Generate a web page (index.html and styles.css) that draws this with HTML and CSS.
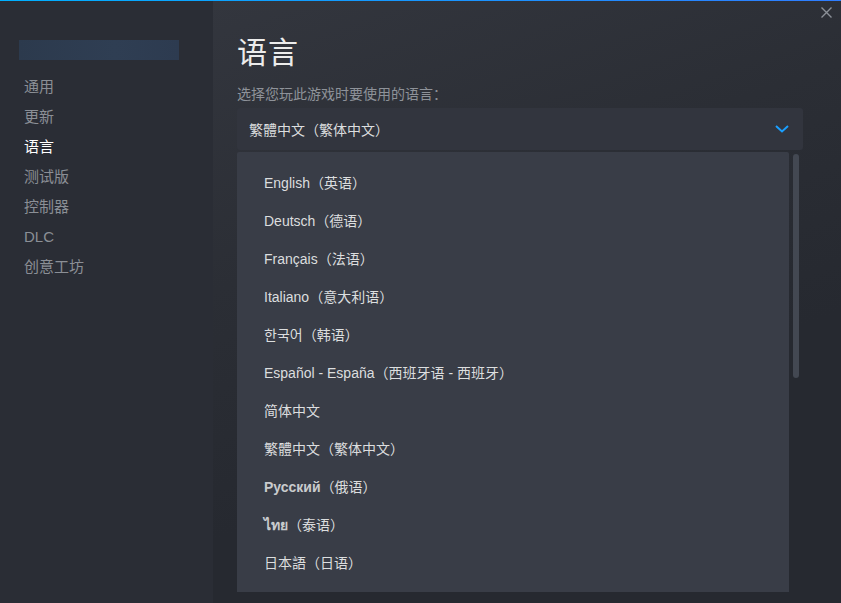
FILE: index.html
```html
<!DOCTYPE html>
<html lang="zh-CN">
<head>
  <meta charset="UTF-8">
  <title>语言</title>
  <link rel="stylesheet" href="styles.css">
</head>
<body>
  <div class="topline"></div>
  <div class="window">
    <aside class="sidebar">
      <div class="game-name"></div>
      <nav class="nav">
        <div class="nav-item">通用</div>
        <div class="nav-item">更新</div>
        <div class="nav-item active">语言</div>
        <div class="nav-item">测试版</div>
        <div class="nav-item">控制器</div>
        <div class="nav-item">DLC</div>
        <div class="nav-item">创意工坊</div>
      </nav>
    </aside>

    <main class="content">
      <button class="close-btn" title="关闭">
        <svg width="11" height="11" viewBox="0 0 11 11">
          <path d="M0.5 0.5 L10.5 10.5 M10.5 0.5 L0.5 10.5" stroke="#8b9097" stroke-width="1.4" fill="none"/>
        </svg>
      </button>

      <h1 class="title">语言</h1>
      <p class="subtitle">选择您玩此游戏时要使用的语言：</p>

      <div class="dropdown">
        <span>繁體中文（繁体中文）</span>
        <svg class="chevron" width="14" height="8" viewBox="0 0 14 8">
          <path d="M1 1 L7 6.5 L13 1" stroke="#1a9fff" stroke-width="2" fill="none"/>
        </svg>
      </div>

      <div class="list-wrap">
        <ul class="lang-list">
          <li>English（英语）</li>
          <li>Deutsch（德语）</li>
          <li>Français（法语）</li>
          <li>Italiano（意大利语）</li>
          <li>한국어（韩语）</li>
          <li>Español - España（西班牙语 - 西班牙）</li>
          <li>简体中文</li>
          <li>繁體中文（繁体中文）</li>
          <li><b>Русский</b>（俄语）</li>
          <li><b>ไทย</b>（泰语）</li>
          <li>日本語（日语）</li>
        </ul>
        <div class="scrollbar"><div class="thumb"></div></div>
      </div>
    </main>
  </div>
</body>
</html>
```

FILE: styles.css
```css
:root {
  --sidebar: #2a2d35;
  --text: #dcdedf;
  --muted: #8b8f96;
  --blue: #1a9fff;
}

* {
  box-sizing: border-box;
}

html, body {
  margin: 0;
  height: 100%;
}

body {
  font-family: 'Liberation Sans', 'Noto Sans CJK SC', 'Noto Sans', sans-serif;
  background-color: #262930;
  color: var(--text);
  overflow: hidden;
  position: relative;
}

.topline {
  position: absolute;
  top: 0;
  left: 0;
  right: 0;
  height: 1px;
  background: linear-gradient(to right, #00b0ff, #2f7dff);
  z-index: 2;
}

.window {
  display: flex;
  height: 603px;
}

.sidebar {
  width: 213px;
  flex-shrink: 0;
  background-color: var(--sidebar);
  padding: 40px 0 0 19px;
}

.game-name {
  width: 160px;
  height: 20px;
  background: linear-gradient(to right, #2c3a4d, #2f3e53 60%, #2d3b50);
}

.nav {
  margin-top: 12px;
  padding-left: 5px;
}

.nav-item {
  font-size: 15px;
  line-height: 30px;
  height: 30px;
  color: var(--muted);
}

.nav-item.active {
  color: #ffffff;
}

.content {
  flex: 1;
  position: relative;
  padding: 34px 38px 0 24px;
  background: linear-gradient(160deg, #33363e 0%, #2b2e35 35%, #262930 65%);
}

.close-btn {
  position: absolute;
  top: 7px;
  right: 9px;
  background: transparent;
  border: none;
  padding: 0;
  width: 11px;
  height: 11px;
  cursor: pointer;
}

.close-btn svg {
  display: block;
}

.title {
  margin: 0;
  font-size: 30px;
  font-weight: normal;
  line-height: 38px;
  color: #ececec;
  letter-spacing: 1px;
}

.subtitle {
  margin: 13px 0 0 0;
  font-size: 14px;
  line-height: 18px;
  color: #8e9299;
}

.dropdown {
  margin-top: 5px;
  height: 42px;
  background-color: #32353e;
  border-radius: 3px;
  display: flex;
  align-items: center;
  justify-content: space-between;
  padding: 0 14px 0 12px;
  font-size: 14px;
  color: var(--text);
}

.list-wrap {
  margin-top: 2px;
  display: flex;
  gap: 4px;
}

.lang-list {
  list-style: none;
  margin: 0;
  padding: 12px 0 10px 27px;
  width: 552px;
  background-color: #393d47;
  border-radius: 2px 2px 0 0;
}

.lang-list li {
  height: 38px;
  line-height: 38px;
  font-size: 14px;
  color: var(--text);
  white-space: nowrap;
}

.lang-list b {
  font-weight: bold;
  color: #c9cbcd;
}

.scrollbar {
  width: 6px;
  padding-top: 2px;
}

.thumb {
  height: 224px;
  background-color: #434852;
  border-radius: 3px;
}
```
